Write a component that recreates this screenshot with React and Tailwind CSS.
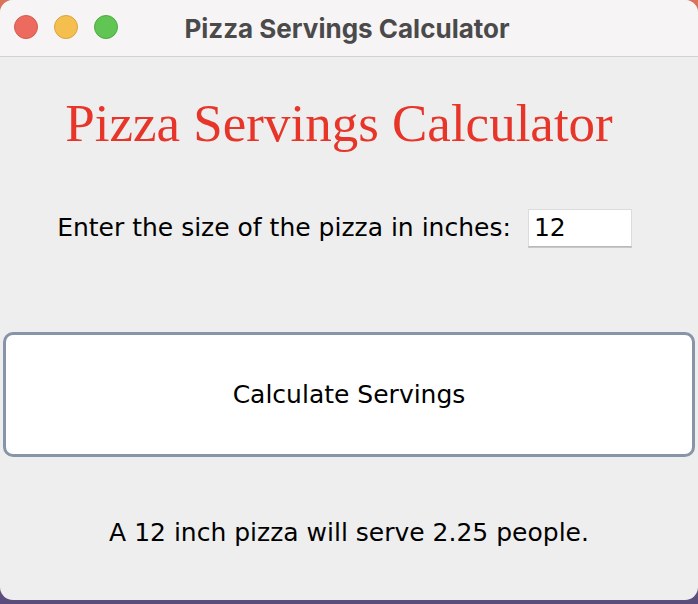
import React, { useState } from "react";

function TrafficLights() {
	return (
		<div className="flex items-center gap-4 absolute left-[14px] top-[15px]">
			<span className="block w-6 h-6 rounded-full bg-[#ed6a5e] border border-[#d65a4f]" />
			<span className="block w-6 h-6 rounded-full bg-[#f5bf4f] border border-[#d9a43c]" />
			<span className="block w-6 h-6 rounded-full bg-[#61c554] border border-[#4fa844]" />
		</div>
	);
}

export default function App() {
	const [size] = useState("12");
	const servings = ((Number(size) / 8) ** 2).toFixed(2);

	return (
		<div className="w-[698px] h-[604px] bg-[linear-gradient(180deg,#d9735a_0%,#c46a64_50%,#5a4d7c_100%)] overflow-hidden">
			<div className="w-[698px] h-[600px] rounded-[13px] overflow-hidden bg-[#eeeeee] flex flex-col">
				<div className="relative h-[57px] shrink-0 bg-[#f6f4f5] border-b border-[#d4d2d3] flex items-center justify-center">
					<TrafficLights />
					<span className="text-[26px] font-bold text-[#4b4a4b] font-['Inter',sans-serif] pr-[4px]">
						Pizza Servings Calculator
					</span>
				</div>

				<div className="flex flex-col font-['DejaVu_Sans',sans-serif] text-black">
					<h1 className="mt-[35px] pr-[20px] text-center font-['Liberation_Serif',serif] text-[53px] leading-[62px] text-[#e8352a]">
						Pizza Servings Calculator
					</h1>

					<div className="mt-[55px] flex items-center justify-center gap-[17px] pr-[9px]">
						<label className="text-[25px] leading-[30px]">Enter the size of the pizza in inches:</label>
						<div className="w-[104px] h-[38px] bg-white border border-[#dcdcdc] border-b-[#b8b8b8] shadow-[0_1px_0_#c8c8c8] flex items-center px-[5px] text-[25px]">
							{size}
						</div>
					</div>

					<button className="mx-[3px] mt-[85px] h-[125px] rounded-[10px] bg-white border-[3px] border-[#8894a8] text-[25px] text-black">
						Calculate Servings
					</button>

					<p className="mt-[61px] text-center text-[25px] leading-[30px]">
						A {size} inch pizza will serve {servings} people.
					</p>
				</div>
			</div>
		</div>
	);
}
